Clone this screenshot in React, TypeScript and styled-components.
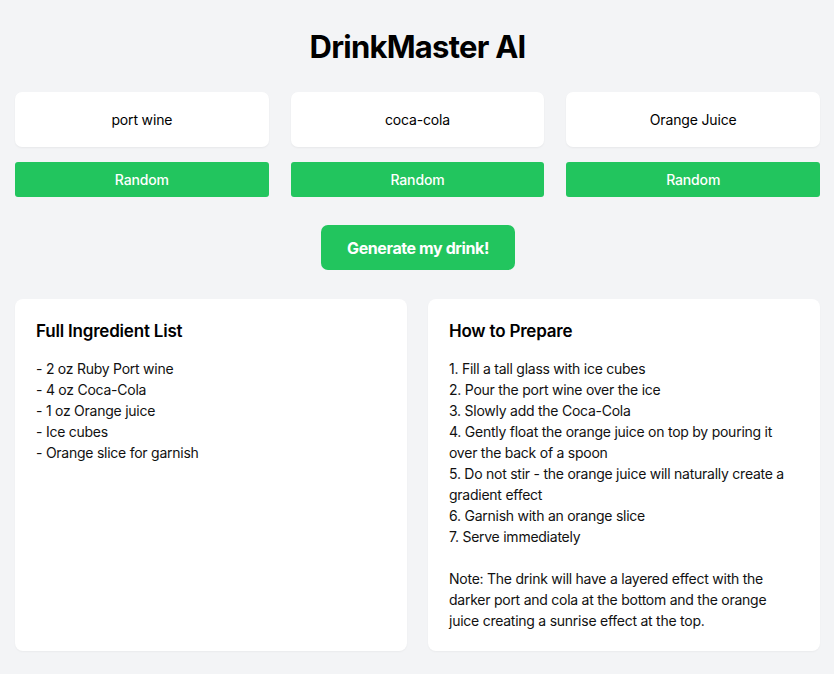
import styled, { createGlobalStyle } from "styled-components";

const GlobalStyle = createGlobalStyle`
  html, body {
    margin: 0;
    padding: 0;
    background: #f3f4f6;
    font-family: Inter, "Noto Sans", sans-serif;
    color: #000;
  }
  * { box-sizing: border-box; }
`

const Page = styled.div`
  padding: 29px 14px 20px 15px;
  display: flex;
  flex-direction: column;
`

const Title = styled.h1`
  margin: 0 0 27px;
  text-align: center;
  font-size: 31px;
  line-height: 36px;
  font-weight: 700;
  letter-spacing: -0.75px;
`

const Inputs = styled.div`
  display: grid;
  grid-template-columns: repeat(3, 1fr);
  column-gap: 22px;
  row-gap: 15px;
`

const Slot = styled.div`
  display: flex;
  flex-direction: column;
  gap: 15px;
`

const IngredientBox = styled.div`
  height: 55px;
  background: #fff;
  border-radius: 7px;
  box-shadow: 0 1px 2px rgba(0, 0, 0, 0.05);
  display: flex;
  align-items: center;
  justify-content: center;
  font-size: 14px;
  letter-spacing: -0.15px;
`

const GreenButton = styled.button<{ $big?: boolean }>`
  border: none;
  background: #22c55e;
  color: #fff;
  font-family: inherit;
  cursor: pointer;
  border-radius: ${p => (p.$big ? "7px" : "3px")};
  font-size: ${p => (p.$big ? "16px" : "14px")};
  font-weight: ${p => (p.$big ? 700 : 500)};
  letter-spacing: ${p => (p.$big ? "-0.4px" : "-0.15px")};
  height: ${p => (p.$big ? "45px" : "35px")};
  padding: ${p => (p.$big ? "0 26px" : "0")};
`

const Center = styled.div`
  display: flex;
  justify-content: center;
  margin: 28px 0 29px;
  padding-left: 1px;
`

const Results = styled.div`
  display: grid;
  grid-template-columns: 1fr 1fr;
  gap: 21px;
`

const Card = styled.section`
  background: #fff;
  border-radius: 8px;
  padding: 20px 21px;
  box-shadow: 0 1px 2px rgba(0, 0, 0, 0.04);
`

const CardTitle = styled.h2`
  margin: 0 0 15px;
  font-size: 17px;
  line-height: 24px;
  font-weight: 600;
  letter-spacing: -0.2px;
`

const Body = styled.div`
  white-space: pre-line;
  font-size: 14px;
  line-height: 21px;
  letter-spacing: -0.25px;
  color: #111;
`

const ingredients = ["port wine", "coca-cola", "Orange Juice"]

const list = `- 2 oz Ruby Port wine
- 4 oz Coca-Cola
- 1 oz Orange juice
- Ice cubes
- Orange slice for garnish`

const steps = `1. Fill a tall glass with ice cubes
2. Pour the port wine over the ice
3. Slowly add the Coca-Cola
4. Gently float the orange juice on top by pouring it over the back of a spoon
5. Do not stir - the orange juice will naturally create a gradient effect
6. Garnish with an orange slice
7. Serve immediately

Note: The drink will have a layered effect with the darker port and cola at the bottom and the orange juice creating a sunrise effect at the top.`

export default function App() {
  return (
    <>
      <GlobalStyle />
      <Page>
        <Title>DrinkMaster AI</Title>
        <Inputs>
          {ingredients.map(name => (
            <Slot key={name}>
              <IngredientBox>{name}</IngredientBox>
              <GreenButton>Random</GreenButton>
            </Slot>
          ))}
        </Inputs>
        <Center>
          <GreenButton $big>Generate my drink!</GreenButton>
        </Center>
        <Results>
          <Card>
            <CardTitle>Full Ingredient List</CardTitle>
            <Body>{list}</Body>
          </Card>
          <Card>
            <CardTitle>How to Prepare</CardTitle>
            <Body>{steps}</Body>
          </Card>
        </Results>
      </Page>
    </>
  )
}
